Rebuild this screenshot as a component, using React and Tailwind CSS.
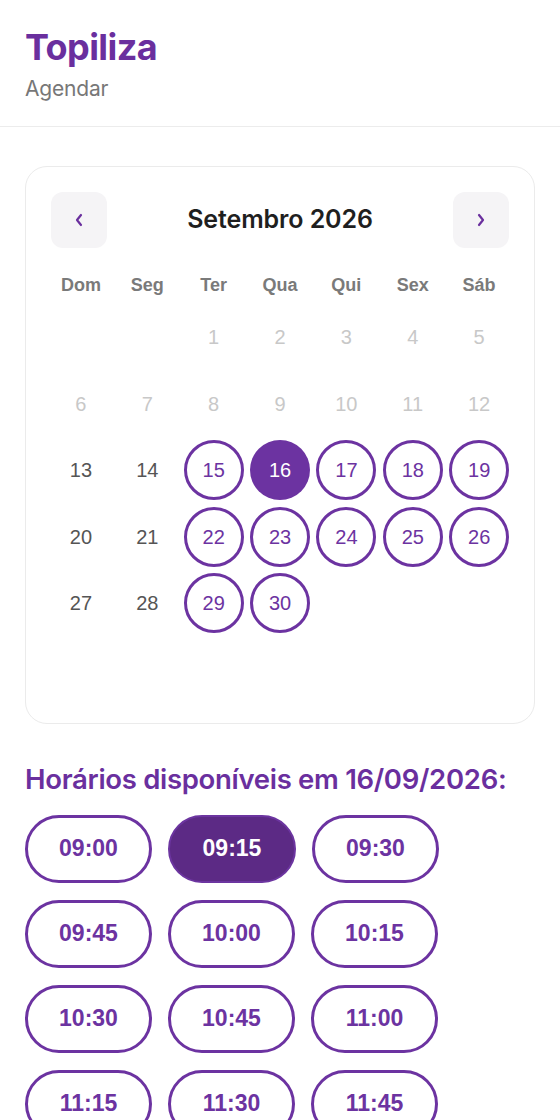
import React, { useState } from "react";

const weekDays = ["Dom", "Seg", "Ter", "Qua", "Qui", "Sex", "Sáb"];

const times = [
  "09:00", "09:15", "09:30",
  "09:45", "10:00", "10:15",
  "10:30", "10:45", "11:00",
  "11:15", "11:30", "11:45",
  "12:00", "12:15", "12:30",
];

// Setembro 2026 começa numa terça-feira
function buildCells() {
  const cells = [];
  for (let i = 0; i < 2; i++) cells.push(null);
  for (let d = 1; d <= 30; d++) cells.push(d);
  while (cells.length < 42) cells.push(null);
  return cells;
}

function isAvailable(day, index) {
  const col = index % 7;
  return day >= 15 && col >= 2;
}

function App() {
  const [selectedDay, setSelectedDay] = useState(16);
  const [selectedTime, setSelectedTime] = useState("09:15");
  const cells = buildCells();

  return (
    <div className="min-h-screen bg-white font-['Inter',sans-serif]">
      {/* Header */}
      <header className="px-[25px] pt-[27px] pb-[23px] border-b border-[#ececec]">
        <h1 className="text-[36px] leading-[40px] font-bold text-[#6a2f9e] tracking-[-0.6px]">
          Topiliza
        </h1>
        <p className="mt-[8px] text-[21px] leading-[28px] text-[#777777] tracking-[-0.2px]">
          Agendar
        </p>
      </header>

      <main className="px-[25px] pt-[39px] pb-10">
        {/* Calendar card */}
        <div className="border border-[#ebebeb] rounded-[22px] px-[25px] pt-[25px] pb-[23px]">
          <div className="flex items-center justify-between">
            <button className="w-[56px] h-[56px] rounded-[12px] bg-[#f5f4f6] flex items-center justify-center text-[#6a2f9e]">
              <svg width="12" height="16" viewBox="0 0 12 16" fill="none">
                <path d="M8 3 L4 8 L8 13" stroke="currentColor" strokeWidth="2.2" strokeLinecap="round" strokeLinejoin="round" />
              </svg>
            </button>
            <h2 className="text-[25px] font-semibold text-[#1f1f1f] tracking-[-0.1px]">
              Setembro 2026
            </h2>
            <button className="w-[56px] h-[56px] rounded-[12px] bg-[#f5f4f6] flex items-center justify-center text-[#6a2f9e]">
              <svg width="12" height="16" viewBox="0 0 12 16" fill="none">
                <path d="M4 3 L8 8 L4 13" stroke="currentColor" strokeWidth="2.2" strokeLinecap="round" strokeLinejoin="round" />
              </svg>
            </button>
          </div>

          <div className="grid grid-cols-7 gap-x-[6.5px] mt-[25px] font-['Liberation_Sans',Arial,sans-serif]">
            {weekDays.map((w) => (
              <div key={w} className="text-center text-[18px] leading-[24px] font-bold text-[#7a7a7a]">
                {w}
              </div>
            ))}
          </div>

          <div className="grid grid-cols-7 gap-[6.5px] mt-[10px] font-['Liberation_Sans',Arial,sans-serif]">
            {cells.map((day, i) => {
              if (day === null) return <div key={i} className="h-[60px]" />;
              const available = isAvailable(day, i);
              const selected = day === selectedDay;
              if (selected) {
                return (
                  <button
                    key={i}
                    className="h-[60px] w-[60px] mx-auto rounded-full bg-[#6c33a1] text-white text-[20px] flex items-center justify-center"
                  >
                    {day}
                  </button>
                );
              }
              if (available) {
                return (
                  <button
                    key={i}
                    onClick={() => setSelectedDay(day)}
                    className="h-[60px] w-[60px] mx-auto rounded-full border-[3px] border-[#6c33a1] text-[#6c33a1] text-[20px] flex items-center justify-center"
                  >
                    {day}
                  </button>
                );
              }
              return (
                <div
                  key={i}
                  className={
                    day < 13
                      ? "h-[60px] flex items-center justify-center text-[20px] text-[#c8c8c8]"
                      : "h-[60px] flex items-center justify-center text-[20px] text-[#555555]"
                  }
                >
                  {day}
                </div>
              );
            })}
          </div>
        </div>

        {/* Times */}
        <h3 className="mt-[39px] text-[27.5px] leading-[32px] font-semibold text-[#6a2f9e] tracking-[-0.3px]">
          Horários disponíveis em 16/09/2026:
        </h3>

        <div className="mt-[20px] flex flex-wrap gap-x-[16px] gap-y-[17px] w-[420px] font-['Liberation_Sans',Arial,sans-serif]">
          {times.map((t) =>
            t === selectedTime ? (
              <button
                key={t}
                className="w-[128px] h-[68px] rounded-full border-[2px] border-[#6c35a0] bg-[#5c2a85] text-white text-[23px] font-bold"
              >
                {t}
              </button>
            ) : (
              <button
                key={t}
                onClick={() => setSelectedTime(t)}
                className="w-[127px] h-[68px] rounded-full border-[3px] border-[#6c33a1] bg-white text-[#6c33a1] text-[23px] font-bold"
              >
                {t}
              </button>
            )
          )}
        </div>
      </main>
    </div>
  );
}

export default App;
